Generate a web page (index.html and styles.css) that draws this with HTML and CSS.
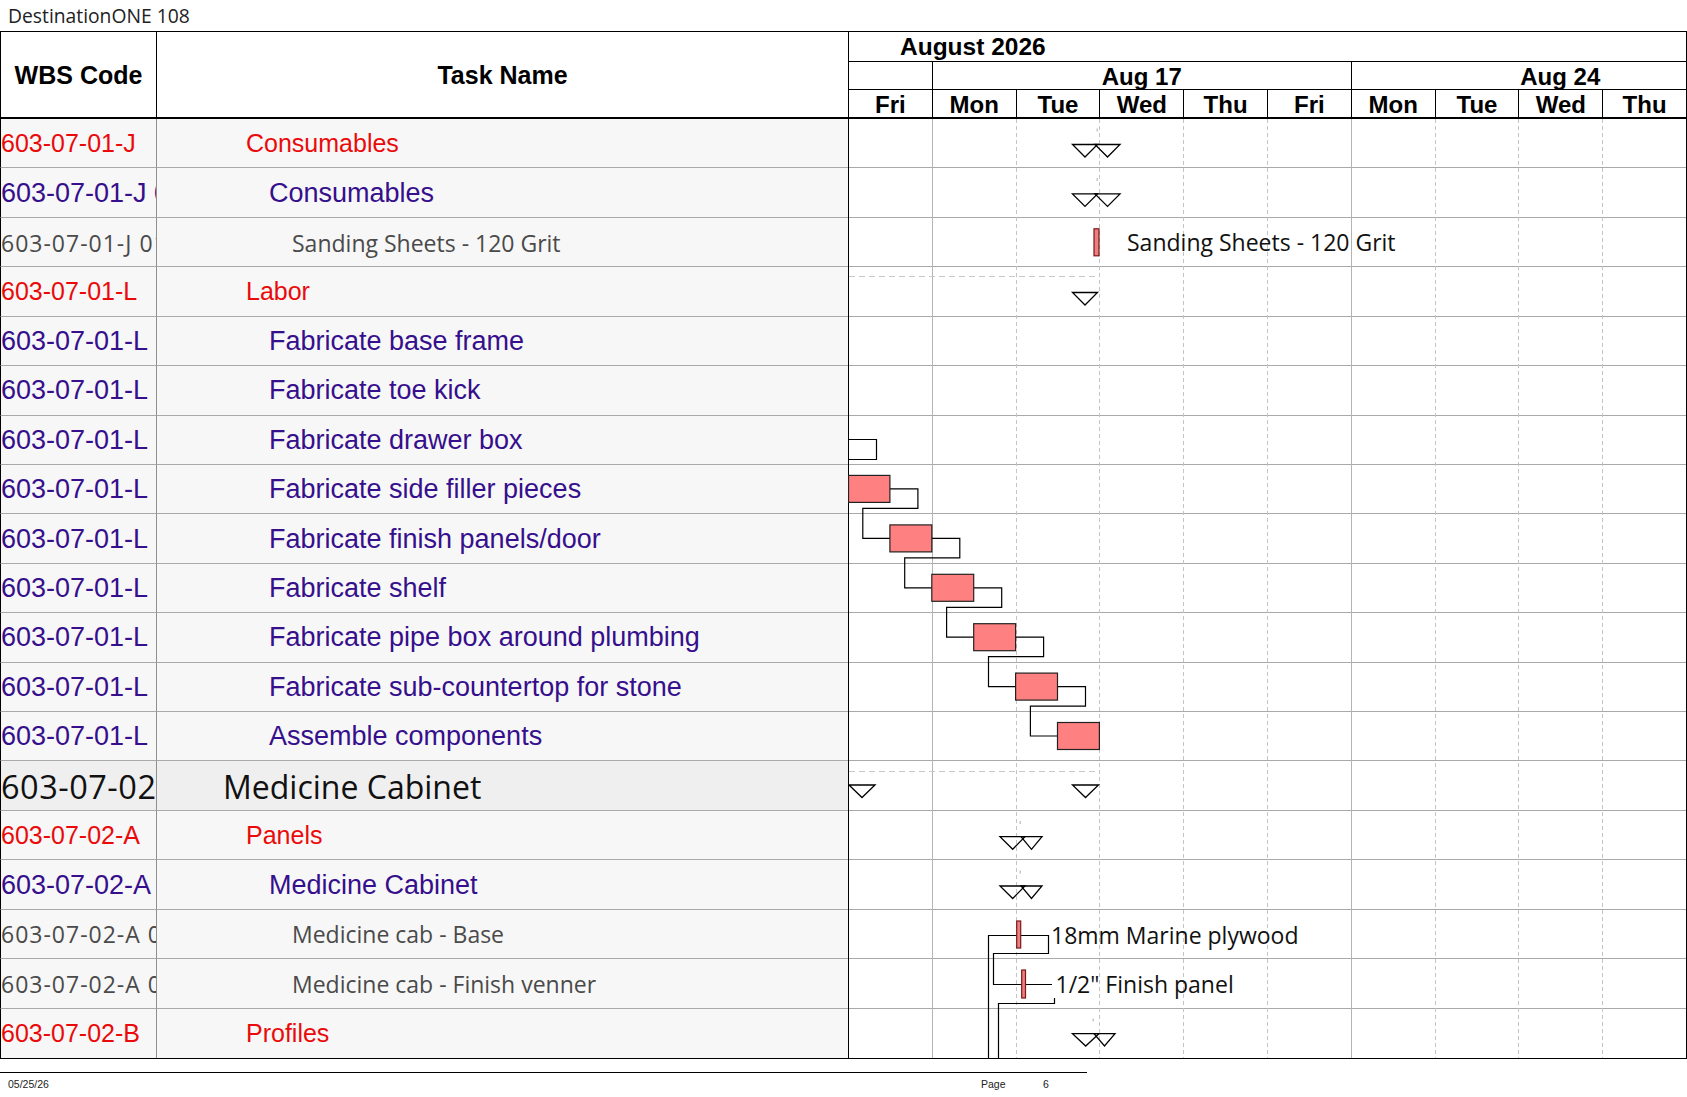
FILE: index.html
```html
<!DOCTYPE html>
<html lang="en">
<head>
<meta charset="utf-8">
<title>DestinationONE 108</title>
<link rel="stylesheet" href="styles.css">
</head>
<body>
<div class="page">
  <div class="title">DestinationONE 108</div>

  <div class="sheet">
    <div class="h-wbs">WBS Code</div>
    <div class="h-task">Task Name</div>
    <div class="timescale">
      <div class="ts-month"><span class="month-label">August 2026</span></div>
      <div class="ts-week">
        <div class="wk wk1"></div>
        <div class="wk wk5"><span class="wk-label">Aug 17</span></div>
        <div class="wk wk4"><span class="wk-label">Aug 24</span></div>
      </div>
      <div class="ts-day">
        <div class="day">Fri</div>
        <div class="day">Mon</div>
        <div class="day">Tue</div>
        <div class="day">Wed</div>
        <div class="day">Thu</div>
        <div class="day">Fri</div>
        <div class="day">Mon</div>
        <div class="day">Tue</div>
        <div class="day">Wed</div>
        <div class="day">Thu</div>
      </div>
    </div>

    <div class="rows">
      <div class="row l1"><div class="wbs">603-07-01-J</div><div class="task">Consumables</div></div>
      <div class="row l2"><div class="wbs">603-07-01-J 01</div><div class="task">Consumables</div></div>
      <div class="row l3"><div class="wbs">603-07-01-J 01</div><div class="task">Sanding Sheets - 120 Grit</div></div>
      <div class="row l1"><div class="wbs">603-07-01-L</div><div class="task">Labor</div></div>
      <div class="row l2"><div class="wbs">603-07-01-L</div><div class="task">Fabricate base frame</div></div>
      <div class="row l2"><div class="wbs">603-07-01-L</div><div class="task">Fabricate toe kick</div></div>
      <div class="row l2"><div class="wbs">603-07-01-L</div><div class="task">Fabricate drawer box</div></div>
      <div class="row l2"><div class="wbs">603-07-01-L</div><div class="task">Fabricate side filler pieces</div></div>
      <div class="row l2"><div class="wbs">603-07-01-L</div><div class="task">Fabricate finish panels/door</div></div>
      <div class="row l2"><div class="wbs">603-07-01-L</div><div class="task">Fabricate shelf</div></div>
      <div class="row l2"><div class="wbs">603-07-01-L</div><div class="task">Fabricate pipe box around plumbing</div></div>
      <div class="row l2"><div class="wbs">603-07-01-L</div><div class="task">Fabricate sub-countertop for stone</div></div>
      <div class="row l2"><div class="wbs">603-07-01-L</div><div class="task">Assemble components</div></div>
      <div class="row l0"><div class="wbs">603-07-02</div><div class="task">Medicine Cabinet</div></div>
      <div class="row l1"><div class="wbs">603-07-02-A</div><div class="task">Panels</div></div>
      <div class="row l2"><div class="wbs">603-07-02-A</div><div class="task">Medicine Cabinet</div></div>
      <div class="row l3"><div class="wbs">603-07-02-A 01</div><div class="task">Medicine cab - Base</div></div>
      <div class="row l3"><div class="wbs">603-07-02-A 02</div><div class="task">Medicine cab - Finish venner</div></div>
      <div class="row l1"><div class="wbs">603-07-02-B</div><div class="task">Profiles</div></div>
    </div>

    <div class="chart">
      <svg class="gantt" width="838" height="939" viewBox="0 0 838 939" xmlns="http://www.w3.org/2000/svg">
        <g class="hlines" stroke="#a9a9a9" stroke-width="1" shape-rendering="crispEdges">
          <line x1="0" x2="838" y1="48.5" y2="48.5"/>
          <line x1="0" x2="838" y1="98.5" y2="98.5"/>
          <line x1="0" x2="838" y1="147.5" y2="147.5"/>
          <line x1="0" x2="838" y1="197.5" y2="197.5"/>
          <line x1="0" x2="838" y1="246.5" y2="246.5"/>
          <line x1="0" x2="838" y1="296.5" y2="296.5"/>
          <line x1="0" x2="838" y1="345.5" y2="345.5"/>
          <line x1="0" x2="838" y1="394.5" y2="394.5"/>
          <line x1="0" x2="838" y1="444.5" y2="444.5"/>
          <line x1="0" x2="838" y1="493.5" y2="493.5"/>
          <line x1="0" x2="838" y1="543.5" y2="543.5"/>
          <line x1="0" x2="838" y1="592.5" y2="592.5"/>
          <line x1="0" x2="838" y1="641.5" y2="641.5"/>
          <line x1="0" x2="838" y1="691.5" y2="691.5"/>
          <line x1="0" x2="838" y1="740.5" y2="740.5"/>
          <line x1="0" x2="838" y1="790.5" y2="790.5"/>
          <line x1="0" x2="838" y1="839.5" y2="839.5"/>
          <line x1="0" x2="838" y1="889.5" y2="889.5"/>
        </g>
        <g class="vlines" shape-rendering="crispEdges" stroke-width="1">
          <line x1="84.5" x2="84.5" y1="0" y2="939" stroke="#b3b3b3"/>
          <line x1="168.5" x2="168.5" y1="0" y2="939" stroke="#c4c4c4" stroke-dasharray="4 3"/>
          <line x1="251.5" x2="251.5" y1="0" y2="939" stroke="#c4c4c4" stroke-dasharray="4 3"/>
          <line x1="335.5" x2="335.5" y1="0" y2="939" stroke="#c4c4c4" stroke-dasharray="4 3"/>
          <line x1="419.5" x2="419.5" y1="0" y2="939" stroke="#c4c4c4" stroke-dasharray="4 3"/>
          <line x1="503.5" x2="503.5" y1="0" y2="939" stroke="#b3b3b3"/>
          <line x1="587.5" x2="587.5" y1="0" y2="939" stroke="#c4c4c4" stroke-dasharray="4 3"/>
          <line x1="670.5" x2="670.5" y1="0" y2="939" stroke="#c4c4c4" stroke-dasharray="4 3"/>
          <line x1="754.5" x2="754.5" y1="0" y2="939" stroke="#c4c4c4" stroke-dasharray="4 3"/>
          <line x1="0.5" x2="0.5" y1="0" y2="939" stroke="#000"/>
        </g>

        <!-- summary dashed lines -->
        <g stroke="#c8c8c8" stroke-width="1.2" stroke-dasharray="6 4" shape-rendering="crispEdges">
          <line x1="1" x2="251" y1="157.5" y2="157.5"/>
          <line x1="1" x2="251" y1="652.5" y2="652.5"/>
        </g>

        <!-- small ticks -->
        <g fill="#c8c8c8">
          <rect x="248.5" y="9.5" width="1.5" height="3"/>
          <rect x="248.5" y="59" width="1.5" height="3"/>
          <rect x="171.5" y="702" width="1.5" height="3"/>
          <rect x="171.5" y="751.5" width="1.5" height="3"/>
          <rect x="244.5" y="899.5" width="1.5" height="3"/>
        </g>

        <!-- summary triangles -->
        <g fill="none" stroke="#000" stroke-width="1.3" stroke-linejoin="miter">
          <polygon points="224.5,25.5 249.5,25.5 237,38"/>
          <polygon points="247,25.5 272,25.5 259.5,38"/>
          <polygon points="224.5,74.9 249.5,74.9 237,87.4"/>
          <polygon points="247,74.9 272,74.9 259.5,87.4"/>
          <polygon points="224.5,173.5 249.5,173.5 237,186"/>
          <polygon points="1,666 27,666 14,678.5"/>
          <polygon points="224.5,666 250.5,666 237.5,678.5"/>
          <polygon points="152,717.7 177,717.7 164.7,730.3"/>
          <polygon points="173,717.7 194,717.7 183.5,730.3"/>
          <polygon points="152,767 177,767 164.7,779.5"/>
          <polygon points="173,767 194,767 183.5,779.5"/>
          <polygon points="224.5,914.7 251,914.7 237.7,927"/>
          <polygon points="246,914.7 267,914.7 256.5,927"/>
        </g>

        <!-- connectors -->
        <g fill="none" stroke="#000" stroke-width="1.2">
          <path d="M0 320.5 H28.5 V340.5 H0"/>
          <path d="M41.9 369.9 H69.9 V389.4 H14.8 V419.4 H41.9"/>
          <path d="M83.8 419.4 H111.8 V438.9 H56.7 V468.8 H83.8"/>
          <path d="M125.7 468.8 H153.7 V488.3 H98.6 V518.2 H125.7"/>
          <path d="M167.6 518.2 H195.6 V537.7 H140.5 V567.6 H167.6"/>
          <path d="M209.5 567.6 H237.5 V587.1 H182.4 V617 H209.5"/>
          <path d="M140.5 939 V816.5 H200.5 V834.5 H145.5 V865.5 H204"/>
          <path d="M206.5 879 V884.5 H150.5 V939"/>
        </g>

        <!-- task bars -->
        <g fill="#ff8080" stroke="#222" stroke-width="1.2">
          <rect x="0.5" y="356.4" width="41.4" height="27"/>
          <rect x="41.9" y="405.9" width="41.9" height="27"/>
          <rect x="83.8" y="455.3" width="41.9" height="27"/>
          <rect x="125.7" y="504.7" width="41.9" height="27"/>
          <rect x="167.6" y="554.1" width="41.9" height="27"/>
          <rect x="209.5" y="603.5" width="41.9" height="27"/>
        </g>
        <g fill="#ec8080" stroke="#7a1818" stroke-width="1.2">
          <rect x="246" y="109.8" width="5" height="27"/>
          <rect x="168.7" y="802" width="4" height="27"/>
          <rect x="173.7" y="851" width="3.8" height="28"/>
        </g>

        <g class="labels">
          <text x="279" y="132">Sanding Sheets - 120 Grit</text>
          <text x="203" y="825">18mm Marine plywood</text>
          <text x="207.5" y="874">1/2" Finish panel</text>
        </g>
      </svg>
    </div>
  </div>

  <div class="footer-line"></div>
  <div class="footer">
    <span class="f-date">05/25/26</span>
    <span class="f-page">Page</span>
    <span class="f-num">6</span>
  </div>
</div>
</body>
</html>
```

FILE: styles.css
```css
* {
  box-sizing: border-box;
}

body {
  margin: 0;
  background: #ffffff;
  font-family: "Liberation Sans", Arial, sans-serif;
  color: #000;
}

.page {
  width: 1687px;
}

.title {
  height: 31px;
  line-height: 31px;
  padding-left: 8px;
  font-family: "Open Sans", "Noto Sans", sans-serif;
  font-size: 19.3px;
  color: #222;
}

/* ---------- sheet ---------- */
.sheet {
  display: grid;
  grid-template-columns: 157px 691px 839px;
  grid-template-rows: 87px 939px;
  border-top: 1px solid #000;
  border-bottom: 1px solid #000;
  width: 1687px;
}

.h-wbs,
.h-task {
  display: flex;
  align-items: center;
  justify-content: center;
  font-weight: bold;
  font-size: 25px;
  border-bottom: 2px solid #000;
  background: #fff;
  padding-top: 1px;
}

.h-wbs {
  border-left: 1px solid #000;
  border-right: 1px solid #000;
}

/* ---------- timescale ---------- */
.timescale {
  display: grid;
  grid-template-rows: 30px 28px 29px;
  border-right: 1px solid #000;
  font-weight: bold;
  font-size: 24px;
}

.ts-month {
  border-left: 1px solid #000;
  border-bottom: 1px solid #000;
  padding-left: 51px;
  padding-top: 1px;
  display: flex;
  align-items: center;
  line-height: 1;
  font-size: 24.5px;
}

.ts-week {
  display: grid;
  grid-template-columns: repeat(10, 1fr);
  border-bottom: 1px solid #000;
}

.wk {
  border-left: 1px solid #000;
  overflow: hidden;
  display: flex;
  align-items: center;
  line-height: 1;
  padding-top: 2px;
}

.wk1 { grid-column: span 1; }
.wk5 { grid-column: span 5; justify-content: center; }
.wk4 { grid-column: span 4; }

.wk4 .wk-label {
  flex: 0 0 417px;
  text-align: center;
}

.ts-day {
  display: grid;
  grid-template-columns: repeat(10, 1fr);
  border-bottom: 2px solid #000;
}

.day {
  border-left: 1px solid #000;
  display: flex;
  align-items: center;
  justify-content: center;
  line-height: 1;
  padding-top: 3px;
}

/* ---------- task rows ---------- */
.rows {
  grid-column: 1 / 3;
  display: grid;
  grid-template-rows: repeat(19, 1fr);
}

.row {
  display: grid;
  grid-template-columns: 157px 691px;
  background: #f7f7f7;
}

.wbs,
.task {
  display: flex;
  align-items: center;
  white-space: nowrap;
  overflow: hidden;
  border-bottom: 1px solid #a9a9a9;
  padding-top: 1px;
}

.wbs {
  border-left: 1px solid #000;
  border-right: 1px solid #8f8f8f;
}

.row:last-child .wbs,
.row:last-child .task {
  border-bottom: none;
}

.l0 {
  background: #efefef;
  color: #111;
  font-family: "Open Sans", "Noto Sans", sans-serif;
  font-size: 32.5px;
}
.l0 .task { padding-left: 66px; font-size: 32px; }
.l0 .wbs { letter-spacing: 0.5px; }

.l1 {
  color: #ea0a0a;
  font-size: 25px;
}
.l1 .task { padding-left: 89px; }

.l2 {
  color: #360f8c;
  font-size: 27px;
}
.l2 .task { padding-left: 112px; }

.l3 {
  color: #4a4a4a;
  font-family: "Open Sans", "Noto Sans", sans-serif;
  font-size: 23px;
}
.l3 .task { padding-left: 135px; }
.l3 .wbs { letter-spacing: 1px; }

/* ---------- chart ---------- */
.chart {
  border-right: 1px solid #000;
  background: #fff;
  overflow: hidden;
}

.gantt {
  display: block;
}

.labels text {
  font-family: "Open Sans", "Noto Sans", sans-serif;
  font-size: 23px;
  fill: #111;
}

/* ---------- footer ---------- */
.footer-line {
  width: 1087px;
  margin-top: 13px;
  border-top: 1px solid #000;
}

.footer {
  display: grid;
  grid-template-columns: 973px 62px auto;
  padding-left: 8px;
  height: 22px;
  line-height: 22px;
  font-size: 10.5px;
  color: #222;
}
```
